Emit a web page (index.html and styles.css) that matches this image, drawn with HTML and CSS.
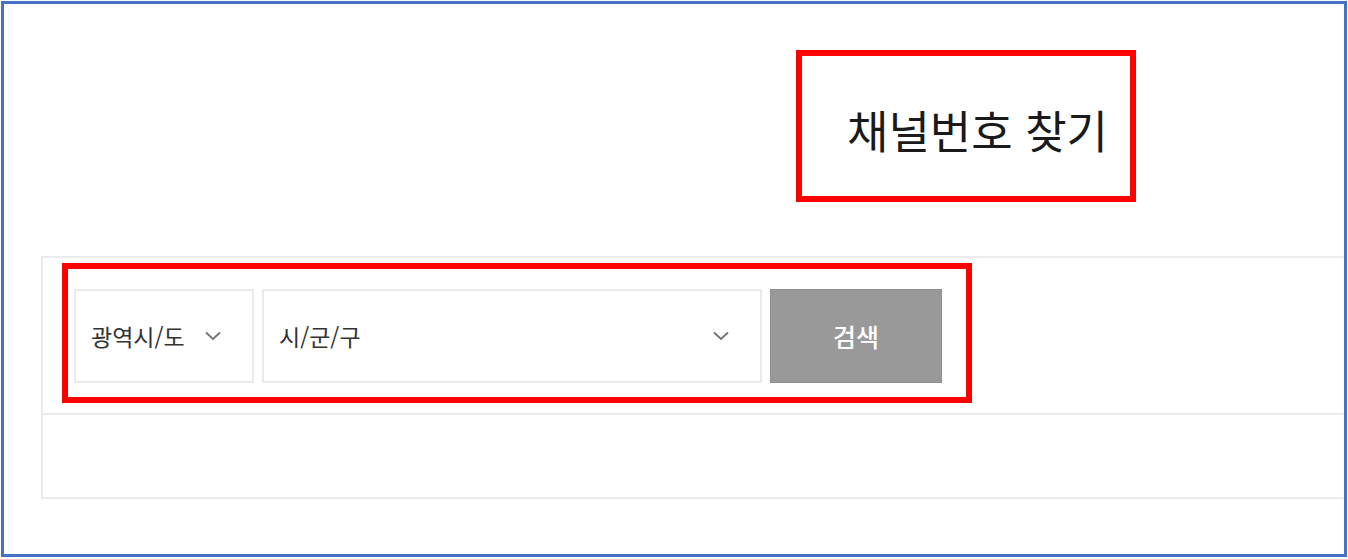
FILE: index.html
```html
<!DOCTYPE html>
<html lang="ko">
<head>
    <meta charset="UTF-8">
    <meta name="viewport" content="width=device-width, initial-scale=1.0">
    <title>채널번호 찾기</title>
    <link rel="stylesheet" href="styles.css">
</head>
<body>

<div class="frame">
    <div class="titleBox">
        <h1>채널번호 찾기</h1>
    </div>

    <div class="searchPanel">
        <div class="searchTop">
            <div class="markBox">
                <div class="selectBox small">
                    <span>광역시/도</span>
                    <svg class="chevron" width="18" height="10" viewBox="0 0 18 10"><path d="M2 1.5 L9 8 L16 1.5" fill="none" stroke="#777" stroke-width="2"/></svg>
                </div>
                <div class="selectBox wide">
                    <span>시/군/구</span>
                    <svg class="chevron" width="18" height="10" viewBox="0 0 18 10"><path d="M2 1.5 L9 8 L16 1.5" fill="none" stroke="#777" stroke-width="2"/></svg>
                </div>
                <button class="searchBtn">검색</button>
            </div>
        </div>
        <div class="searchResult"></div>
    </div>
</div>

</body>
</html>
```

FILE: styles.css
```css
body {
    margin: 0;
    background-color: #fff;
    font-family: "Noto Sans CJK KR", "Noto Sans", sans-serif;
}
.frame {
    margin: 1px;
    width: 1346px;
    height: 556px;
    box-sizing: border-box;
    border: 3px solid #4472c4;
    overflow: hidden;
}
.titleBox {
    margin: 46px 0 0 792px;
    width: 340px;
    height: 152px;
    box-sizing: border-box;
    border: 6px solid #ff0000;
    display: flex;
    align-items: center;
    padding: 6px 0 0 45px;
}
h1 {
    margin: 0;
    font-size: 45px;
    font-weight: 400;
    color: #1a1a1a;
    line-height: 1;
}
.searchPanel {
    margin: 54px 0 0 37px;
    width: 1400px;
    border: 2px solid #ebebeb;
}
.searchTop {
    padding: 5px 0 10px 19px;
    border-bottom: 2px solid #ebebeb;
}
.markBox {
    display: inline-flex;
    gap: 8px;
    border: 6px solid #ff0000;
    padding: 20px 24px 14px 6px;
}
.selectBox {
    height: 94px;
    box-sizing: border-box;
    border: 2px solid #ebebeb;
    display: flex;
    align-items: center;
    justify-content: space-between;
    padding: 0 30px 0 15px;
    font-size: 23px;
    color: #333;
}
.small {
    width: 180px;
}
.wide {
    width: 500px;
}
.chevron {
    display: block;
}
.searchBtn {
    width: 172px;
    height: 94px;
    background-color: #999;
    border: 1px solid #8e8e8e;
    color: #fff;
    font-family: inherit;
    font-size: 25px;
    font-weight: 500;
    cursor: pointer;
}
.searchResult {
    height: 82px;
}
```
